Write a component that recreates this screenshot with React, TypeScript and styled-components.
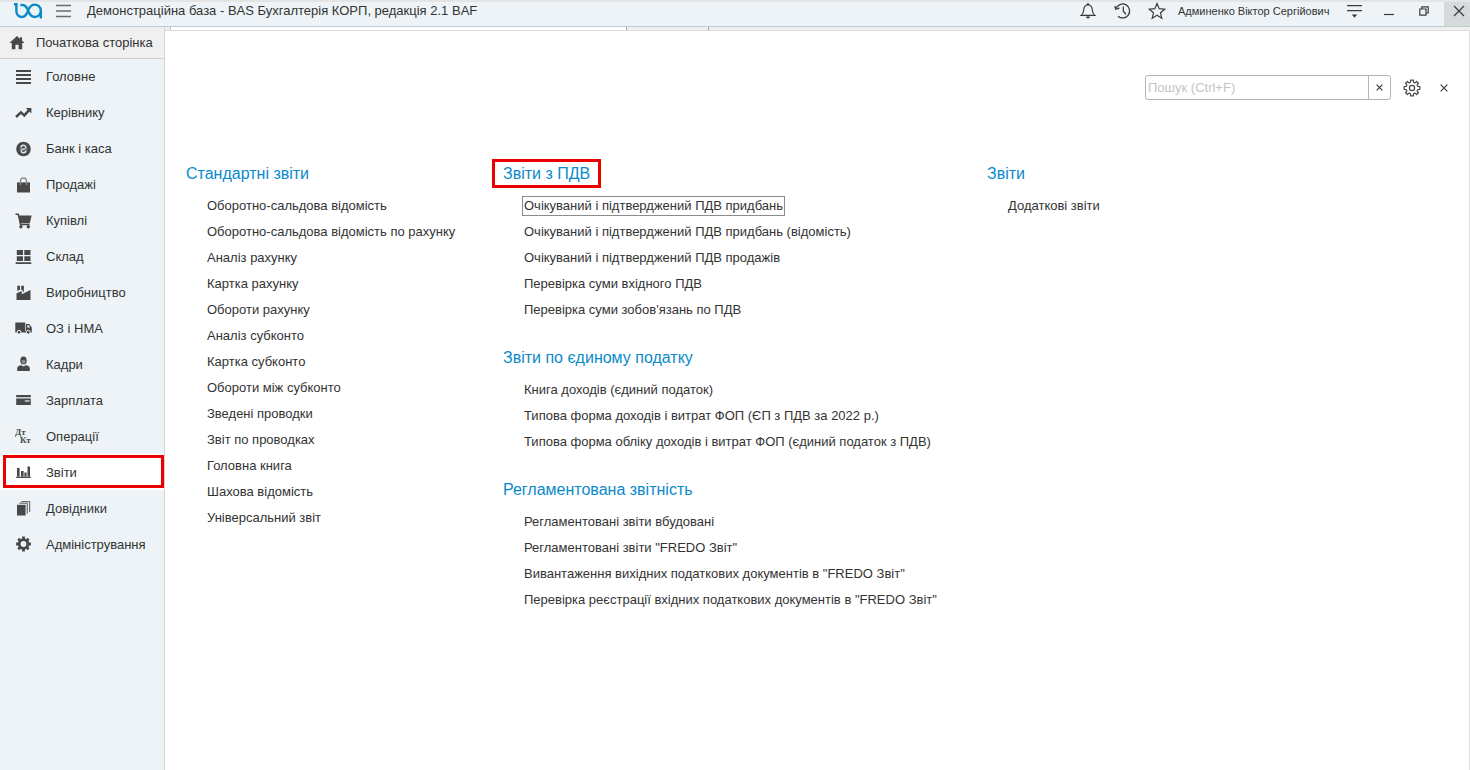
import React from "react";
import styled, { createGlobalStyle, css } from "styled-components";

const GlobalStyle = createGlobalStyle`
  *, *::before, *::after { box-sizing: border-box; }
  body {
    margin: 0;
    background: #fff;
    color: #333;
    font-family: "Liberation Sans", Arial, sans-serif;
    font-size: 13px;
  }
  ul { list-style: none; margin: 0; padding: 0; }
  button { border: 0; background: none; padding: 0; color: inherit; font: inherit; }
  a { color: inherit; text-decoration: none; }
  svg { display: block; }
`;

const Window = styled.div`
  min-height: 100vh;
  display: flex;
  flex-direction: column;
`;

const TitleBar = styled.header`
  display: flex;
  align-items: stretch;
  height: 27px;
  background: #edf3f6;
  border-top: 2px solid #e4e4e4;
  border-bottom: 1px solid #c6cacc;
`;

const BarGroup = styled.div`
  display: flex;
  align-items: center;
  height: 18px;
`;

const Brand = styled(BarGroup)`
  flex: 1;
  padding-left: 13px;
`;

const AppTitle = styled.h1`
  margin: 0 0 0 3px;
  font-size: 13px;
  line-height: 18px;
  font-weight: 400;
  white-space: nowrap;
`;

const IconButton = styled.button<{ $width: number }>`
  display: flex;
  align-items: center;
  justify-content: center;
  flex: none;
  width: ${(p) => p.$width}px;
  height: 18px;
`;

const UserName = styled.span`
  min-width: 156px;
  margin-left: 4px;
  font-size: 11px;
  line-height: 18px;
  white-space: nowrap;
`;

const CloseWindow = styled.button`
  display: flex;
  justify-content: center;
  width: 26px;
  padding: 3px 0 0 4px;
  background: #d5dadd;
`;

const Body = styled.div`
  flex: 1;
  display: flex;
`;

const Sidebar = styled.nav`
  flex: none;
  width: 165px;
  background: #edf3f6;
  border-right: 1px solid #d2d5d6;
`;

const HomeLink = styled.a`
  display: flex;
  align-items: center;
  height: 32px;
  padding-left: 9px;
  gap: 11px;
  background: #f0f0f0;
  border-bottom: 1px solid #cfcfcf;
  white-space: nowrap;
`;

const NavList = styled.ul`
  display: grid;
  grid-template-rows: repeat(14, 1fr);
  height: 503px;
`;

const NavItem = styled.li`
  display: flex;
`;

const NavLink = styled.a<{ $current?: boolean }>`
  position: relative;
  flex: 1;
  display: flex;
  align-items: center;
  gap: 14px;
  padding-left: 15px;
  ${(p) =>
    p.$current &&
    css`
      background: #fff;
      &::after {
        content: "";
        position: absolute;
        inset: 1px 0 2px 3px;
        border: 3px solid #eb0000;
      }
    `}
`;

const Main = styled.main`
  flex: 1;
  min-width: 0;
  display: flex;
  flex-direction: column;
`;

const TabStrip = styled.div`
  display: flex;
  height: 4px;
  padding-left: 5px;
  background: #f0f0f0;
  border-bottom: 1px solid #dcdcdc;
`;

const TabEdge = styled.div<{ $width: number; $active?: boolean }>`
  width: ${(p) => p.$width}px;
  background: ${(p) => (p.$active ? "#fff" : "#f0f0f0")};
  border-right: 1px solid #a0a0a0;
  border-left: ${(p) => (p.$active ? "1px solid #c0c0c0" : "0")};
`;

const Panel = styled.section`
  flex: 1;
  padding: 44px 4px 24px 21px;
  border-right: 1px solid #dcdcdc;
`;

const Toolbar = styled.div`
  display: flex;
  justify-content: flex-end;
  align-items: center;
`;

const SearchBox = styled.form`
  display: flex;
  width: 246px;
  height: 25px;
  margin-right: 10px;
  border: 1px solid #b4b4b4;
  border-radius: 3px;
`;

const SearchInput = styled.input`
  flex: 1;
  min-width: 0;
  padding: 0 2px;
  border: 0;
  outline: 0;
  background: none;
  font: inherit;
  color: #333;
  &::placeholder { color: #c4c4c4; opacity: 1; }
`;

const ClearButton = styled.button`
  display: flex;
  align-items: center;
  justify-content: center;
  width: 22px;
  border-left: 1px solid #b4b4b4;
`;

const Columns = styled.div`
  display: grid;
  grid-template-columns: 317px 484px auto;
  margin-top: 64px;
`;

const Column = styled.div`
  display: flex;
  flex-direction: column;
  gap: 25px;
`;

const GroupTitle = styled.h2<{ $marked?: boolean }>`
  position: relative;
  width: max-content;
  margin: 0 0 9px;
  font-size: 16px;
  line-height: 20px;
  font-weight: 400;
  color: #0a8acb;
  ${(p) =>
    p.$marked &&
    css`
      &::after {
        content: "";
        position: absolute;
        inset: -5px -11px -4px -11px;
        border: 3px solid #eb0000;
      }
    `}
`;

const ReportList = styled.ul`
  padding-left: 21px;
`;

const ReportItem = styled.li`
  height: 26px;
  display: flex;
  align-items: center;
`;

const ReportLink = styled.a<{ $focused?: boolean }>`
  line-height: 16px;
  white-space: nowrap;
  outline: ${(p) => (p.$focused ? "1px solid #8c8c8c" : "none")};
  outline-offset: 1px;
`;

const Icon16 = ({ children }: { children: React.ReactNode }) => (
  <svg width="17" height="16" viewBox="0 0 17 16" fill="#484848" aria-hidden="true">
    {children}
  </svg>
);

const Cross = ({ size, weight }: { size: number; weight: number }) => (
  <svg width={size} height={size} viewBox="0 0 12 12" stroke="#3c3c3c" strokeWidth={weight} fill="none" aria-hidden="true">
    <path d="M1 1 11 11M11 1 1 11" />
  </svg>
);

const nav: { label: string; icon: React.ReactNode; current?: boolean }[] = [
  { label: "Головне", icon: <path d="M1 1h15v1.9H1zM1 5h15v1.9H1zM1 9h15v1.9H1zM1 13h15v1.9H1z" /> },
  {
    label: "Керівнику",
    icon: (
      <>
        <path d="M1 12 6 7.4 9.3 10.4 14 5.2" fill="none" stroke="#484848" strokeWidth="2.5" />
        <path d="M10.8 3H16.4V8.6z" />
      </>
    ),
  },
  {
    label: "Банк і каса",
    icon: (
      <>
        <circle cx="8.5" cy="8" r="7.3" />
        <path d="M6 6.6C6 3.6 10.8 3.6 10.8 6.2S6.2 7.8 6.2 10 10.8 12.4 11 9.6" fill="none" stroke="#e2e8eb" strokeWidth="1.5" />
        <path d="M4.6 7.4h7.8M4.6 9h7.8" fill="none" stroke="#9a9fa2" strokeWidth=".8" />
      </>
    ),
  },
  {
    label: "Продажі",
    icon: (
      <>
        <path d="M2 5.4H15V15.5H2z" />
        <path d="M5.5 8V4a3 3 0 0 1 6 0v4" fill="none" stroke="#8b8f91" strokeWidth="1.4" />
      </>
    ),
  },
  {
    label: "Купівлі",
    icon: (
      <>
        <path d="M.5 1.2H3.2L5.6 11.4H14.5" fill="none" stroke="#484848" strokeWidth="1.5" />
        <path d="M3.3 2.6H16.6L14.8 10.2H5z" />
        <circle cx="5.9" cy="13.8" r="1.7" />
        <circle cx="13.3" cy="13.8" r="1.7" />
      </>
    ),
  },
  { label: "Склад", icon: <path d="M1.8 1H8V6H1.8zM9.3 1h6.2v5H9.3zM1.8 7.2H8V12H1.8zM9.3 7.2h6.2V12H9.3zM.7 13.2h15.6V15H.7z" /> },
  { label: "Виробництво", icon: <path d="M1.5 15V8.3L6.8 6V9.2L15.5 5V15zM2.3.7H5V4.7L2.3 6.1zM6.2.7H8.9V6.5L7.8 7V5.2L6.2 5z" /> },
  {
    label: "ОЗ і НМА",
    icon: (
      <>
        <path d="M.3 2.4H10.3V12.4H.3zM11 4H14.2L16.8 7.6V12.4H10.3V11H11z" />
        <path d="M12.3 5.2h1.4L15.2 7.6h-2.9z" fill="#edf3f6" />
        <circle cx="4" cy="12.2" r="1.9" stroke="#edf3f6" />
        <circle cx="13.3" cy="12.2" r="1.9" stroke="#edf3f6" />
      </>
    ),
  },
  {
    label: "Кадри",
    icon: (
      <>
        <ellipse cx="8.5" cy="4.6" rx="3.2" ry="4" />
        <path d="M6.4 4.5Q8.5 3.4 10.6 4.5 10.4 7.6 8.5 8 6.6 7.6 6.4 4.5z" fill="#8d9193" />
        <path d="M2.2 15V12Q2.6 9.8 6.2 9.3L8.5 10.5 10.8 9.3Q14.4 9.8 14.8 12V15z" />
      </>
    ),
  },
  {
    label: "Зарплата",
    icon: (
      <>
        <path d="M1.2 3H15.8V5.2H1.2zM1.2 6.5H15.8V13H1.2z" />
        <path d="M9.8 8.2h4.8v1.5H9.8z" fill="#c9cfd2" />
      </>
    ),
  },
  {
    label: "Операції",
    icon: (
      <g fontFamily="Liberation Serif, serif" fontWeight="700" fontSize="9">
        <text x="0" y="7">Дт</text>
        <text x="5" y="15">Кт</text>
      </g>
    ),
  },
  { label: "Звіти", current: true, icon: <path d="M2 4H4.6V12.5H2zM6 7H8.6V12.5H6zM9.4 8.5H11.6V12.5H9.4zM12.5 2.5H15V12.5H12.5zM1.2 12.8H15.8V14H1.2z" /> },
  {
    label: "Довідники",
    icon: (
      <>
        <path d="M2 4.8H10.6V15.5H2z" />
        <path d="M4.3 3.2H12.3V13.6M6.4 1.5H14.6V12" fill="none" stroke="#6b6f71" strokeWidth="1.2" />
      </>
    ),
  },
  {
    label: "Адміністрування",
    icon: (
      <>
        <circle cx="8.5" cy="8" r="4.3" fill="none" stroke="#484848" strokeWidth="2.8" />
        <path
          d="M8.5.6V3M8.5 13v2.4M1.1 8H3.5M13.5 8h2.4M3.3 2.8 5 4.5M12 11.5l1.7 1.7M3.3 13.2 5 11.5M12 4.5l1.7-1.7"
          stroke="#484848"
          strokeWidth="2.8"
        />
      </>
    ),
  },
];

type Group = { title: string; marked?: boolean; focused?: string; links: string[] };

const columns: Group[][] = [
  [
    {
      title: "Стандартні звіти",
      links: [
        "Оборотно-сальдова відомість",
        "Оборотно-сальдова відомість по рахунку",
        "Аналіз рахунку",
        "Картка рахунку",
        "Обороти рахунку",
        "Аналіз субконто",
        "Картка субконто",
        "Обороти між субконто",
        "Зведені проводки",
        "Звіт по проводках",
        "Головна книга",
        "Шахова відомість",
        "Універсальний звіт",
      ],
    },
  ],
  [
    {
      title: "Звіти з ПДВ",
      marked: true,
      focused: "Очікуваний і підтверджений ПДВ придбань",
      links: [
        "Очікуваний і підтверджений ПДВ придбань",
        "Очікуваний і підтверджений ПДВ придбань (відомість)",
        "Очікуваний і підтверджений ПДВ продажів",
        "Перевірка суми вхідного ПДВ",
        "Перевірка суми зобов'язань по ПДВ",
      ],
    },
    {
      title: "Звіти по єдиному податку",
      links: [
        "Книга доходів (єдиний податок)",
        "Типова форма доходів і витрат ФОП (ЄП з ПДВ за 2022 р.)",
        "Типова форма обліку доходів і витрат ФОП (єдиний податок з ПДВ)",
      ],
    },
    {
      title: "Регламентована звітність",
      links: [
        "Регламентовані звіти вбудовані",
        'Регламентовані звіти "FREDO Звіт"',
        'Вивантаження вихідних податкових документів в "FREDO Звіт"',
        'Перевірка реєстрації вхідних податкових документів в "FREDO Звіт"',
      ],
    },
  ],
  [{ title: "Звіти", links: ["Додаткові звіти"] }],
];

// Outline of a toothed wheel centred on (9, 9).
const gearOutline = (() => {
  const points: string[] = [];
  for (let i = 0; i < 8; i++) {
    const base = (i * Math.PI) / 4;
    for (const [offset, radius] of [[-0.25, 6], [-0.17, 8], [0.17, 8], [0.25, 6]]) {
      const x = 9 + radius * Math.sin(base + offset);
      const y = 9 - radius * Math.cos(base + offset);
      points.push(`${x.toFixed(2)},${y.toFixed(2)}`);
    }
  }
  return points.join(" ");
})();

export default function App() {
  return (
    <>
      <GlobalStyle />
      <Window>
        <TitleBar>
          <Brand>
            <svg width="30" height="18" viewBox="0 0 30 18" fill="none" stroke="#0a8acb" strokeWidth="2.4" role="img" aria-label="BAS">
              <path d="M1 2.2H3.4V9.5A5.5 5.5 0 0 0 8.9 15C13.4 15 14.2 10.4 15.5 7.6 16.8 4.6 18.6 2.6 21.8 2.6A6 6 0 0 1 27.8 8.6V16.4M7.4 3H9.6C13.4 3 14.4 7 15.6 9.8 16.9 13 18.8 15 21.8 15A6 6 0 0 0 27.8 9" />
            </svg>
            <IconButton $width={41} aria-label="Меню">
              <svg width="15" height="14" viewBox="0 0 15 14" stroke="#686c6e" strokeWidth="1.4">
                <path d="M0 1.5H15M0 7H15M0 12.5H15" />
              </svg>
            </IconButton>
            <AppTitle>Демонстраційна база - BAS Бухгалтерія КОРП, редакція 2.1 BAF</AppTitle>
          </Brand>
          <BarGroup>
            <IconButton $width={35} aria-label="Сповіщення">
              <svg width="16" height="18" viewBox="0 0 16 18" fill="none" stroke="#3c3c3c" strokeWidth="1.2">
                <path d="M1.2 13.4C3 12 3.6 10.5 3.8 7.5 4 4.6 5.5 3 8 3S12 4.6 12.2 7.5C12.4 10.5 13 12 14.8 13.4zM7 2.8Q8 .4 9 2.8" />
                <path d="M5.8 14.6H10.2Q9.6 16.6 8 16.6T5.8 14.6z" fill="#3c3c3c" stroke="none" />
              </svg>
            </IconButton>
            <IconButton $width={35} aria-label="Історія">
              <svg width="18" height="18" viewBox="0 0 18 18" fill="none" stroke="#3c3c3c" strokeWidth="1.3">
                <path d="M2.3 6A7 7 0 1 1 4 14.2M9.3 4.5V9.2L12 12.2" />
                <path d="M.8 4 1.8 7.2 5.4 6.2" />
              </svg>
            </IconButton>
            <IconButton $width={34} aria-label="Вибране">
              <svg width="18" height="18" viewBox="0 0 18 18" fill="none" stroke="#3c3c3c" strokeWidth="1.2">
                <path d="M9 1.6 11.2 6.7 16.7 7.2 12.5 10.8 13.8 16.2 9 13.3 4.2 16.2 5.5 10.8 1.3 7.2 6.8 6.7z" />
              </svg>
            </IconButton>
            <UserName>Админенко Віктор Сергійович</UserName>
            <IconButton $width={41} aria-label="Сервіс">
              <svg width="15" height="14" viewBox="0 0 15 14" stroke="#3c3c3c" strokeWidth="1.2">
                <path d="M0 1.6H15M0 6.6H15" />
                <path d="M4.8 10.6H10.2L7.5 13.8z" fill="#3c3c3c" stroke="none" />
              </svg>
            </IconButton>
            <IconButton $width={28} aria-label="Згорнути">
              <svg width="10" height="10" viewBox="0 0 10 10" stroke="#3c3c3c" strokeWidth="1.2">
                <path d="M0 8.5H10" />
              </svg>
            </IconButton>
            <IconButton $width={41} aria-label="Відновити">
              <svg width="10" height="10" viewBox="0 0 10 10" fill="none" stroke="#3c3c3c" strokeWidth="1.2">
                <path d="M.8 3H7V9.2H.8zM2.8 3V.8H9.2V7H7" />
              </svg>
            </IconButton>
          </BarGroup>
          <CloseWindow aria-label="Закрити програму">
            <Cross size={12} weight={1.2} />
          </CloseWindow>
        </TitleBar>
        <Body>
          <Sidebar>
            <HomeLink href="#home">
              <svg width="16" height="14" viewBox="0 0 16 14" fill="#484848" aria-hidden="true">
                <path d="M8 0 .5 7H2.8V13.2H6.4V8.8H9.6V13.2H13.2V7H15.5L13 4.6V1.2H11V2.8z" />
              </svg>
              Початкова сторінка
            </HomeLink>
            <NavList>
              {nav.map((item) => (
                <NavItem key={item.label}>
                  <NavLink href="#section" $current={item.current} aria-current={item.current ? "page" : undefined}>
                    <Icon16>{item.icon}</Icon16>
                    {item.label}
                  </NavLink>
                </NavItem>
              ))}
            </NavList>
          </Sidebar>
          <Main>
            <TabStrip>
              <TabEdge $width={457} $active />
              <TabEdge $width={82} />
            </TabStrip>
            <Panel>
              <Toolbar>
                <SearchBox>
                  <SearchInput type="text" placeholder="Пошук (Ctrl+F)" aria-label="Пошук" />
                  <ClearButton type="button" aria-label="Очистити">
                    <Cross size={7} weight={2} />
                  </ClearButton>
                </SearchBox>
                <IconButton $width={22} aria-label="Налаштування">
                  <svg width="18" height="18" viewBox="0 0 18 18" fill="none" stroke="#484848" strokeWidth="1.2">
                    <polygon points={gearOutline} strokeLinejoin="round" />
                    <circle cx="9" cy="9" r="2.6" />
                  </svg>
                </IconButton>
                <IconButton $width={42} aria-label="Закрити">
                  <Cross size={8} weight={1.8} />
                </IconButton>
              </Toolbar>
              <Columns>
                {columns.map((groups) => (
                  <Column key={groups[0].title}>
                    {groups.map((group) => (
                      <section key={group.title}>
                        <GroupTitle $marked={group.marked}>{group.title}</GroupTitle>
                        <ReportList>
                          {group.links.map((link) => (
                            <ReportItem key={link}>
                              <ReportLink href="#report" $focused={link === group.focused}>
                                {link}
                              </ReportLink>
                            </ReportItem>
                          ))}
                        </ReportList>
                      </section>
                    ))}
                  </Column>
                ))}
              </Columns>
            </Panel>
          </Main>
        </Body>
      </Window>
    </>
  );
}
